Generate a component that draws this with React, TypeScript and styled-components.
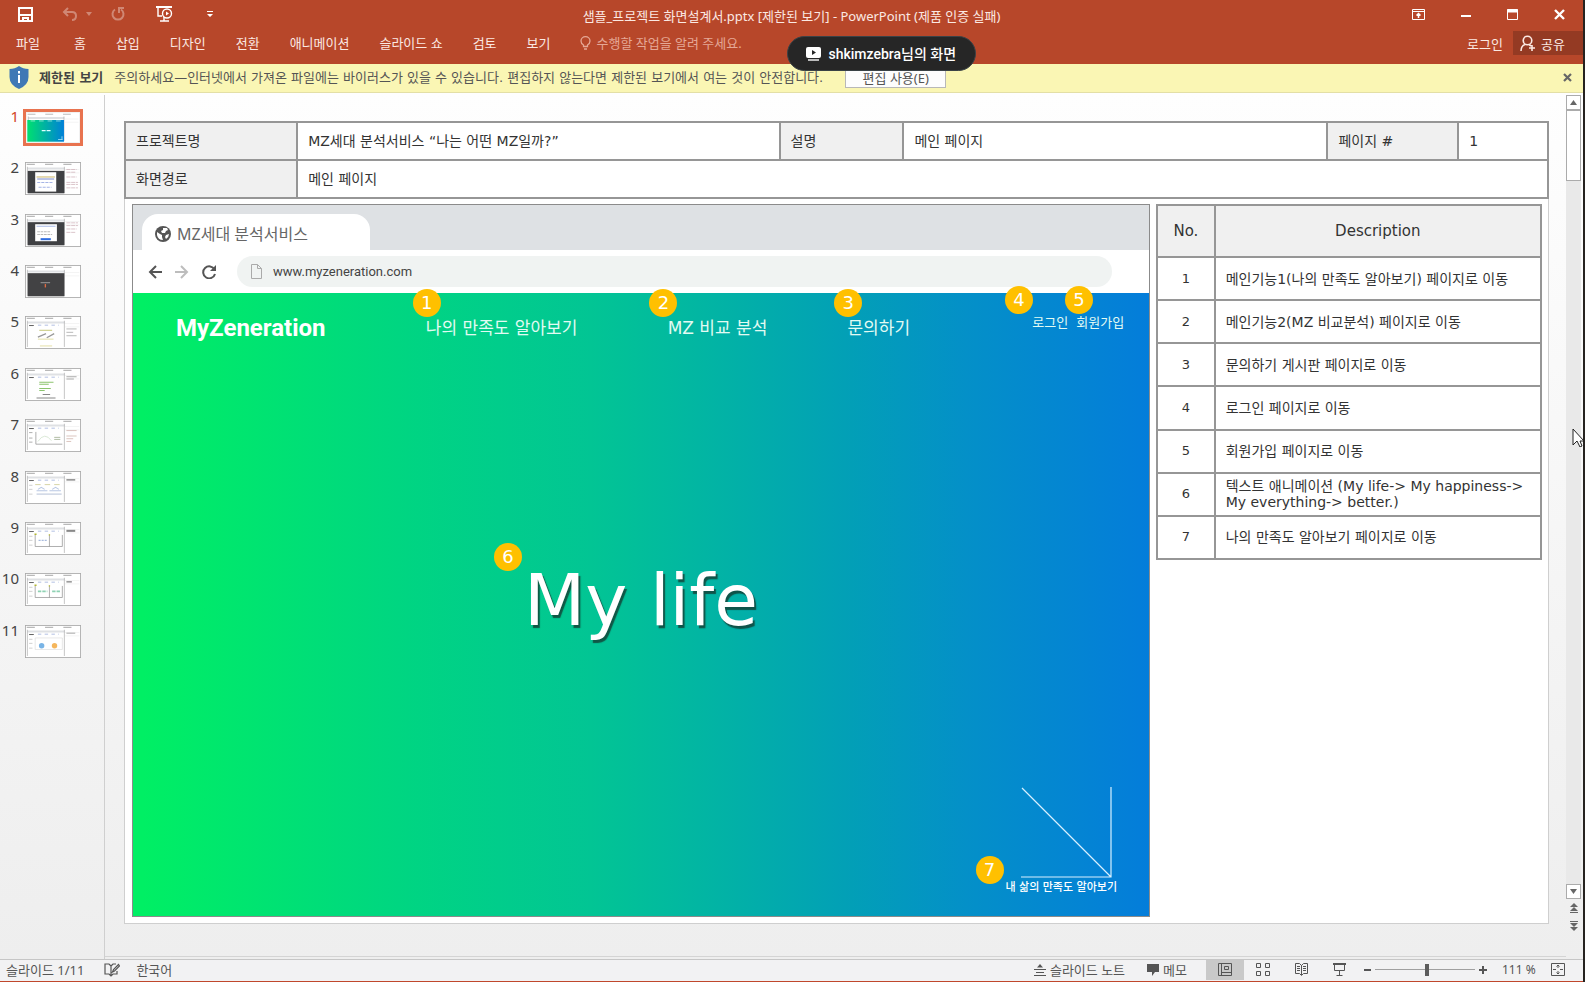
import React from "react";
import styled, { createGlobalStyle, css } from "styled-components";

const uiFont = `"Noto Sans", "Noto Sans CJK KR", sans-serif`;
const slideFont = `"DejaVu Sans", "Noto Sans CJK KR", sans-serif`;

const GlobalStyle = createGlobalStyle`
  *, *::before, *::after { box-sizing: border-box; }
  body { margin: 0; background: #262320; font-family: ${uiFont}; font-size: 13px; }
  button, input { font: inherit; color: inherit; }
  button { border: 0; background: none; padding: 0; cursor: pointer; }
  svg { display: block; flex: none; }
  table { border-collapse: collapse; }
`;

/* ---------- window frame ---------- */

const Window = styled.div`
  position: relative;
  display: flex;
  flex-direction: column;
  min-height: calc(100vh - 2px);
  margin: 0 2px 2px 0;
  background: #f0f0f0;
  border-bottom: 1px solid #c0472c;
`;

const Ribbon = styled.header`
  background: #b7472a;
  color: #fbe9e3;
  height: 64px;
`;

const TitleBar = styled.div`
  display: grid;
  grid-template-columns: 1fr auto 1fr;
  height: 31px;
`;

const QuickAccess = styled.div`
  display: flex;
  align-items: center;
  height: 28px;
  padding-left: 18px;
`;

const QuickButton = styled.button<{ $gap?: number; $dim?: boolean }>`
  margin-right: ${(p) => p.$gap ?? 0}px;
  opacity: ${(p) => (p.$dim ? 0.35 : 1)};
  color: #fff;
`;

const WindowTitle = styled.h1`
  margin: 0;
  font-size: 13px;
  font-weight: 400;
  line-height: 32px;
  white-space: nowrap;
`;

const WindowControls = styled.div`
  display: flex;
  justify-content: flex-end;
  height: 28px;
`;

const WindowButton = styled.button`
  display: grid;
  place-items: center;
  width: 47px;
  color: #fff;
`;

const TabRow = styled.nav`
  display: flex;
  align-items: center;
  height: 24px;
  padding-left: 1px;
  white-space: nowrap;
`;

const RibbonTab = styled.button<{ $file?: boolean }>`
  padding: 0 15px;
  ${(p) => p.$file && css`padding-right: 19px;`}
  line-height: 24px;
`;

const TellMe = styled.label`
  display: flex;
  align-items: center;
  gap: 5px;
  margin-left: 15px;
  flex: 1;
  color: #e5a896;
  input {
    flex: 1;
    min-width: 0;
    padding: 0;
    border: 0;
    outline: 0;
    background: none;
  }
  input::placeholder { color: #e5a896; opacity: 1; }
`;

const SignIn = styled.button`
  padding: 0 10px;
`;

const ShareButton = styled.button`
  display: flex;
  align-items: center;
  gap: 5px;
  width: 70px;
  height: 24px;
  padding-left: 7px;
  background: #943a23;
`;

const ScreenPill = styled.div`
  position: absolute;
  top: 36px;
  left: 50%;
  margin-left: -5px;
  display: flex;
  align-items: center;
  gap: 8px;
  width: 189px;
  height: 35px;
  padding-left: 18px;
  border: 1px solid #3a4246;
  border-radius: 18px;
  background: #262626;
  color: #fff;
  font: 500 14px/20px Roboto, "Noto Sans CJK KR", sans-serif;
  white-space: nowrap;
`;

/* ---------- protected view bar ---------- */

const MessageBar = styled.section`
  display: flex;
  align-items: center;
  height: 29px;
  padding: 0 11px 1px 9px;
  border-bottom: 1px solid #e3dfa6;
  background: #faf6b4;
  color: #555;
  font-family: ${slideFont};
  line-height: 18px;
  white-space: nowrap;
`;

const MessageTitle = styled.strong`
  margin: 0 11px 0 10px;
  color: #444;
`;

const EnableButton = styled.button`
  width: 101px;
  height: 21px;
  margin: 0 auto 0 22px;
  border: 1px solid #b8b8b8;
  background: #fdfdfd;
  font-family: ${uiFont};
  line-height: 18px;
`;

/* ---------- workspace ---------- */

const Workspace = styled.div`
  flex: 1;
  display: flex;
  background: linear-gradient(#fefefe, #f6f6f6 50%, #eeeeee);
`;

const ThumbPane = styled.aside`
  width: 105px;
  flex: none;
  margin-top: 2px;
  border-right: 1px solid #cfcfcf;
`;

const ThumbList = styled.ol`
  display: grid;
  grid-auto-rows: 1fr;
  height: 565px;
  margin: 14px 0 0;
  padding: 0;
  list-style: none;
`;

const ThumbButton = styled.button<{ $active?: boolean }>`
  display: grid;
  grid-template-columns: 19px 60px;
  gap: 4px;
  align-items: start;
  span {
    color: ${(p) => (p.$active ? "#d24726" : "#444")};
    font-size: 15px;
    line-height: 15px;
    text-align: right;
  }
  svg {
    width: 60px;
    height: 37px;
    border: ${(p) => (p.$active ? "3px solid #e8734f" : "2px solid transparent")};
  }
`;

const Stage = styled.main`
  flex: 1;
  min-width: 0;
  padding: 28px 17px 32px 19px;
  border-bottom: 1px solid #d4d4d4;
  margin-bottom: 2px;
`;

const Slide = styled.article`
  border: 1px solid #cfcfcf;
  border-top: 0;
  background: #fff;
  font-family: ${slideFont};
  color: #333;
`;

const InfoTable = styled.table`
  width: calc(100% + 2px);
  margin: 0 -1px;
  table-layout: fixed;
  font-size: 14px;
  th, td {
    height: 38px;
    padding: 0 10px;
    border: 2px solid #969696;
    font-weight: 400;
    text-align: left;
    line-height: 18px;
    white-space: nowrap;
  }
  th { background: #f0f0f0; }
`;

const SlideBody = styled.div`
  display: flex;
  align-items: flex-start;
  gap: 6px;
  padding: 5px 6px 6px 7px;
`;

const DescTable = styled.table`
  flex: 385 1 0;
  min-width: 0;
  height: 356px;
  table-layout: fixed;
  font-size: 14px;
  th, td {
    padding: 0 10px;
    border: 2px solid #969696;
    text-align: left;
    line-height: 16px;
  }
  thead th {
    height: 52px;
    background: #f0f0f0;
    font-size: 15px;
    font-weight: 400;
    text-align: center;
  }
  tbody tr { height: 43px; }
  tbody th {
    font-size: 13px;
    font-weight: 400;
    text-align: center;
  }
`;

/* ---------- browser mock ---------- */

const Browser = styled.section`
  flex: 1019 1 0;
  min-width: 0;
  border: 1px solid #8b8b8b;
  background: #fff;
`;

const TabStrip = styled.div`
  display: flex;
  align-items: flex-end;
  height: 45px;
  padding-left: 9px;
  background: #dee1e4;
`;

const BrowserTab = styled.div`
  display: flex;
  align-items: center;
  gap: 6px;
  width: 228px;
  height: 36px;
  padding: 4px 0 0 13px;
  border-radius: 16px 16px 0 0;
  background: #fff;
  color: #666;
  font: 16px/20px ${uiFont};
`;

const AddressRow = styled.div`
  display: flex;
  align-items: center;
  height: 43px;
  padding: 0 37px 0 15px;
  color: #555;
`;

const NavButton = styled.button<{ $dim?: boolean }>`
  width: 27px;
  color: ${(p) => (p.$dim ? "#bdbdbd" : "#555")};
`;

const AddressField = styled.label`
  display: flex;
  align-items: center;
  gap: 11px;
  flex: 1;
  height: 31px;
  margin-left: 8px;
  padding-left: 14px;
  border-radius: 16px;
  background: #f0f3f2;
  input {
    flex: 1;
    padding: 0;
    border: 0;
    background: none;
    color: #444;
    font: 13px/18px Roboto, sans-serif;
  }
`;

const Hero = styled.div`
  position: relative;
  display: flex;
  flex-direction: column;
  height: 623px;
  background: linear-gradient(
    90deg,
    #00ef64 1%,
    #00d582 27%,
    #02c594 45%,
    #02b4a4 57%,
    #02a0b6 70%,
    #0490c8 82%,
    #047dda 100%
  );
  color: #fff;
`;

const HeroNav = styled.nav`
  display: grid;
  grid-template-columns: 250fr 242fr 180fr 185fr auto;
  align-items: center;
  height: 66px;
  padding: 0 25px 0 43px;
  color: #e2fbf3;
  font-size: 17px;
  a { color: inherit; text-decoration: none; white-space: nowrap; }
`;

const Brand = styled.a`
  && { color: #fff; }
  padding-top: 3px;
  font: 700 24px/28px Roboto, sans-serif;
`;

const AuthLinks = styled.div`
  display: flex;
  gap: 8px;
  padding-bottom: 10px;
  font-size: 13px;
`;

const Headline = styled.h2`
  flex: 1;
  display: grid;
  place-items: center;
  margin: 0;
  padding-top: 56px;
  font-size: 71px;
  font-weight: 400;
  line-height: 84px;
  text-shadow: 2px 3px 1px rgba(20, 60, 50, 0.8);
`;

const HeroLink = styled.a`
  align-self: flex-end;
  display: flex;
  flex-direction: column;
  align-items: flex-end;
  margin-right: 32px;
  padding-bottom: 18px;
  color: #fff;
  font-size: 11px;
  font-weight: 500;
  line-height: 20px;
  text-decoration: none;
  svg { margin-right: 5px; }
`;

const Badge = styled.span<{ $x: number; $y: number }>`
  position: absolute;
  left: ${(p) => p.$x}%;
  top: ${(p) => p.$y}%;
  width: 28px;
  height: 28px;
  margin: -14px 0 0 -14px;
  border-radius: 50%;
  background: #ffc000;
  color: #fff;
  font-size: 18px;
  line-height: 28px;
  text-align: center;
`;

/* ---------- scroll bar ---------- */

const ScrollBar = styled.div`
  display: flex;
  flex-direction: column;
  align-items: center;
  width: 15px;
  margin: 2px 2px 24px 0;
  color: #666;
`;

const ScrollTrack = styled.div`
  flex: 1;
  width: 15px;
  background: #e9e9e9;
`;

const ScrollThumb = styled.div`
  height: 71px;
  border: 1px solid #ababab;
  background: #fff;
`;

const ScrollButton = styled.button<{ $plain?: boolean }>`
  display: grid;
  place-items: center;
  width: 15px;
  height: ${(p) => (p.$plain ? 18 : 15)}px;
  border: ${(p) => (p.$plain ? "0" : "1px solid #ababab")};
  background: ${(p) => (p.$plain ? "none" : "#fff")};
`;

const Cursor = styled.svg`
  position: absolute;
  right: 0;
  top: 428px;
`;

/* ---------- status bar ---------- */

const StatusBar = styled.footer`
  display: flex;
  align-items: center;
  height: 22px;
  padding: 0 18px 2px 6px;
  border-top: 1px solid #c6c6c6;
  background: #f2f2f3;
  color: #555;
  line-height: 18px;
  white-space: nowrap;
`;

const StatusButton = styled.button<{ $gap: number }>`
  display: flex;
  align-items: center;
  gap: 4px;
  margin-right: ${(p) => p.$gap}px;
`;

const ViewButtons = styled.div`
  display: flex;
  margin-right: 6px;
`;

const ViewButton = styled.button<{ $active?: boolean }>`
  display: grid;
  place-items: center;
  width: 38px;
  height: 20px;
  background: ${(p) => (p.$active ? "#c9c9c9" : "none")};
`;

const Push = styled.span`
  flex: 1;
`;

const ZoomRange = styled.input`
  appearance: none;
  width: 100px;
  height: 14px;
  margin: 0 4px;
  background: linear-gradient(#a0a0a0, #a0a0a0) center / 100% 1px no-repeat;
  &::-webkit-slider-thumb {
    appearance: none;
    width: 4px;
    height: 12px;
    background: #5c5c5c;
  }
`;

const ZoomValue = styled.span`
  width: 56px;
  padding-left: 15px;
  margin-right: 8px;
  font-size: 12px;
`;

/* ---------- data ---------- */

const ribbonTabs = ["파일", "홈", "삽입", "디자인", "전환", "애니메이션", "슬라이드 쇼", "검토", "보기"];

const descriptions = [
  "메인기능1(나의 만족도 알아보기) 페이지로 이동",
  "메인기능2(MZ 비교분석) 페이지로 이동",
  "문의하기 게시판 페이지로 이동",
  "로그인 페이지로 이동",
  "회원가입 페이지로 이동",
  "텍스트 애니메이션 (My life-> My happiness-> My everything-> better.)",
  "나의 만족도 알아보기 페이지로 이동",
];

const badges: [number, number][] = [
  [28.9, 1.6],
  [52.2, 1.6],
  [70.4, 1.6],
  [87.2, 1.1],
  [93.1, 1.1],
  [36.9, 42.3],
  [84.3, 92.6],
];

/* ---------- slide thumbnails ---------- */

const thumbArt: Record<number, React.ReactNode> = {
  1: (
    <>
      <rect x="4" y="25" width="112" height="68" fill="url(#thumbHero)" />
      <path d="M48 58h30" stroke="#dff" strokeWidth="4" strokeDasharray="12 3" />
      <path d="M98 86h14M110 76v10" stroke="#dff" strokeWidth="2" />
      <path d="M14 28h98" stroke="#cfe" strokeWidth="2" strokeDasharray="14 12" />
    </>
  ),
  2: (
    <>
      <rect x="8" y="26" width="108" height="66" fill="#3f4043" />
      <rect x="30" y="30" width="62" height="57" fill="#fff" />
      <path d="M34 44h54" stroke="#d9c98e" strokeWidth="4" />
      <path d="M36 50h50" stroke="#7d8ccf" strokeWidth="3" />
      <path d="M36 60h46M40 74h38" stroke="#a5b4e6" strokeWidth="3" strokeDasharray="9 3" />
      <path d="M122 22h30M122 30h26M122 44h30M122 60h34M122 66h34M122 76h34" stroke="#c9a9b2" strokeWidth="2" strokeDasharray="12 2" />
    </>
  ),
  3: (
    <>
      <rect x="8" y="24" width="108" height="68" fill="#3f4043" />
      <rect x="30" y="30" width="64" height="50" fill="#fff" />
      <path d="M34 36h56" stroke="#a9bbe8" strokeWidth="3" />
      <path d="M36 52h40M36 60h44" stroke="#bbb" strokeWidth="3" strokeDasharray="8 2" />
      <path d="M46 74h30" stroke="#2f6de0" strokeWidth="6" />
      <path d="M122 26h34M122 34h34M122 44h30M122 54h28" stroke="#c9a9b2" strokeWidth="2" strokeDasharray="12 2" />
    </>
  ),
  4: (
    <>
      <rect x="8" y="24" width="108" height="68" fill="#424244" />
      <path d="M46 52h28" stroke="#999" strokeWidth="3" />
      <path d="M60 56v10" stroke="#e06a42" strokeWidth="4" />
    </>
  ),
  5: (
    <>
      <path d="M42 42h38" stroke="#c7c97a" strokeWidth="3" />
      <path d="M38 62l24-10M64 64l22-12" stroke="#999" strokeWidth="4" />
      <path d="M38 68h46M44 88h36" stroke="#d6cf7a" strokeWidth="2" />
      <path d="M122 38h30M122 48h20M122 58h30" stroke="#999" strokeWidth="2" />
    </>
  ),
  6: (
    <>
      <path d="M42 42h42M42 48h28M42 60h34M42 66h16" stroke="#8cc46e" strokeWidth="3" />
      <path d="M52 78h22M34 88h56" stroke="#888" strokeWidth="3" />
      <path d="M122 26h30M122 32h22" stroke="#aaa" strokeWidth="3" />
    </>
  ),
  7: (
    <>
      <path d="M32 38v36h78M12 40h10M12 56h10M12 68h10" stroke="#888" strokeWidth="2" fill="none" />
      <path d="M38 66q20-30 40-2" stroke="#c9dfc4" strokeWidth="2" fill="none" />
      <path d="M86 54h18M86 60h18" stroke="#8b9d79" strokeWidth="2" />
      <path d="M122 34h30M122 50h30M122 58h20M122 66h14" stroke="#c9a9a0" strokeWidth="2" />
    </>
  ),
  8: (
    <>
      <path d="M30 40h80" stroke="#c3c07d" strokeWidth="2" strokeDasharray="16 12" />
      <path d="M34 58h32M72 58h34M38 54l10-6 10 6M80 54l10-6 10 6" stroke="#b9c8e4" strokeWidth="3" fill="none" />
      <path d="M34 68h74" stroke="#d4dbe8" strokeWidth="5" />
      <path d="M122 26h26" stroke="#999" strokeWidth="5" />
    </>
  ),
  9: (
    <>
      <path d="M30 38v34h80V38M72 38v34" stroke="#888" strokeWidth="2" fill="none" />
      <path d="M40 54h24" stroke="#a9bbdd" strokeWidth="3" strokeDasharray="6 3" />
      <path d="M28 36h6M70 38h4" stroke="#b5b833" strokeWidth="4" />
      <path d="M122 26h26" stroke="#888" strokeWidth="6" />
    </>
  ),
  10: (
    <>
      <path d="M30 38v34h80V38M72 38v34" stroke="#888" strokeWidth="2" fill="none" />
      <path d="M38 54h28M80 54h26" stroke="#8fd2b4" strokeWidth="5" strokeDasharray="10 3" />
      <path d="M28 36h6M70 38h4" stroke="#b5b833" strokeWidth="4" />
      <path d="M122 26h16" stroke="#888" strokeWidth="4" />
    </>
  ),
  11: (
    <>
      <path d="M30 38v34h80V38z" stroke="#ddd" strokeWidth="2" fill="none" />
      <circle cx="49" cy="61" r="8" fill="#79b4e6" />
      <circle cx="87" cy="61" r="8" fill="#f5b65c" />
      <path d="M122 24h26" stroke="#aaa" strokeWidth="3" />
    </>
  ),
};

function Thumb({ n }: { n: number }) {
  return (
    <svg viewBox="0 0 165 97" preserveAspectRatio="none" aria-hidden="true">
      <defs>
        <linearGradient id="thumbHero">
          <stop offset="0" stopColor="#00e070" />
          <stop offset="1" stopColor="#0080d8" />
        </linearGradient>
      </defs>
      <rect x="1" y="1" width="163" height="95" fill="#fff" stroke={n === 1 ? "#eee" : "#a9a9a9"} strokeWidth="3" />
      <path d="M5 7h155" stroke="#b9b9b9" strokeWidth="3" strokeDasharray="24 30" />
      <path d="M7 16h110v6H7z" fill="#dfe1e4" />
      <path d="M7 14v77M116 14v77" stroke="#aaa" strokeWidth="2" />
      <path d="M118 22h42M118 32h42" stroke="#ddd" strokeWidth="1" />
      {n > 4 && (
        <>
          <path d="M12 28h14" stroke="#666" strokeWidth="3" />
          <path d="M38 27h62" stroke="#8da2d6" strokeWidth="2" strokeDasharray="10 10" />
        </>
      )}
      {n > 7 && <path d="M12 42h10M12 54h10M12 68h10" stroke="#bbb" strokeWidth="2" />}
      {thumbArt[n]}
    </svg>
  );
}

/* ---------- page ---------- */

export default function App() {
  return (
    <Window>
      <GlobalStyle />
      <Ribbon>
        <TitleBar>
          <QuickAccess>
            <QuickButton $gap={29} aria-label="저장">
              <svg width="15" height="15" fill="none" stroke="currentColor" strokeWidth="2">
                <path d="M1 1h13v13H1zM2 8h11" />
                <path d="M5 14v-3h5v3" />
              </svg>
            </QuickButton>
            <QuickButton $gap={8} $dim aria-label="실행 취소">
              <svg width="16" height="14" fill="none" stroke="currentColor" strokeWidth="2">
                <path d="M6 1L2 5l4 4M2 5h8q4 0 4 4t-4 4" />
              </svg>
            </QuickButton>
            <QuickButton $gap={19} $dim aria-label="실행 취소 목록">
              <svg width="6" height="4" fill="currentColor"><path d="M0 0h6L3 4z" /></svg>
            </QuickButton>
            <QuickButton $gap={31} $dim aria-label="다시 실행">
              <svg width="14" height="14" fill="none" stroke="currentColor" strokeWidth="2">
                <path d="M4 2.500a5.500 5.500 0 1 0 6 0M8 6V1h5" />
              </svg>
            </QuickButton>
            <QuickButton $gap={34} aria-label="처음부터 시작">
              <svg width="17" height="16" fill="none" stroke="currentColor" strokeWidth="1.4">
                <path d="M0 1h16" strokeWidth="2" />
                <path d="M2 1v9h4M8 11v4M4 15h9" />
                <circle cx="11" cy="7.500" r="4.500" />
                <path d="M10 5.500v4l3-2z" fill="currentColor" stroke="none" />
              </svg>
            </QuickButton>
            <QuickButton aria-label="빠른 실행 도구 모음 사용자 지정">
              <svg width="6" height="6" fill="currentColor"><path d="M0 0h6v1H0zM0 3h6L3 6z" /></svg>
            </QuickButton>
          </QuickAccess>
          <WindowTitle>샘플_프로젝트 화면설계서.pptx [제한된 보기] - PowerPoint (제품 인증 실패)</WindowTitle>
          <WindowControls>
            <WindowButton aria-label="리본 메뉴 표시 옵션">
              <svg width="13" height="11" fill="none" stroke="currentColor">
                <path d="M.5.5h12v10H.5zM.5 2.500h12" />
                <path d="M6.500 9V4.500M4.500 6.500l2-2 2 2" strokeWidth="1.500" />
              </svg>
            </WindowButton>
            <WindowButton aria-label="최소화">
              <svg width="10" height="12" fill="currentColor"><path d="M0 7h10v2H0z" /></svg>
            </WindowButton>
            <WindowButton aria-label="최대화">
              <svg width="11" height="11" fill="none" stroke="currentColor"><path d="M.5.5h10v10H.5z" /><path d="M0 2h11" strokeWidth="3" /></svg>
            </WindowButton>
            <WindowButton aria-label="닫기">
              <svg width="11" height="11" stroke="currentColor" strokeWidth="2.400"><path d="M1 1l9 9M10 1l-9 9" /></svg>
            </WindowButton>
          </WindowControls>
        </TitleBar>
        <TabRow>
          {ribbonTabs.map((t, i) => (
            <RibbonTab key={t} $file={i === 0}>{t}</RibbonTab>
          ))}
          <TellMe>
            <svg width="11" height="15" fill="none" stroke="currentColor" strokeWidth="1.300">
              <path d="M3.500 10.500V9Q1 7.500 1 5a4.500 4.300 0 0 1 9 0q0 2.500-2.500 4v1.500zM4 13h3" />
            </svg>
            <input aria-label="수행할 작업" placeholder="수행할 작업을 알려 주세요." />
          </TellMe>
          <SignIn>로그인</SignIn>
          <ShareButton>
            <svg width="16" height="17" fill="none" stroke="currentColor" strokeWidth="1.600">
              <circle cx="7.500" cy="5.500" r="4.300" />
              <path d="M1 16q0-5 4-6.500M9 9.500l2 1.500M12 10v6M9 13h6" />
            </svg>
            공유
          </ShareButton>
        </TabRow>
      </Ribbon>

      <MessageBar>
        <svg width="20" height="23" viewBox="0 0 20 23">
          <path d="M10 0q4 3 9.500 3v8q0 8-9.500 12Q.5 19 .5 11V3Q6 3 10 0z" fill="#3f78b5" />
          <path d="M9 5h2v2.500H9zM9 9h2v8H9z" fill="#fff" />
        </svg>
        <MessageTitle>제한된 보기</MessageTitle>
        <span>주의하세요—인터넷에서 가져온 파일에는 바이러스가 있을 수 있습니다. 편집하지 않는다면 제한된 보기에서 여는 것이 안전합니다.</span>
        <EnableButton>편집 사용(E)</EnableButton>
        <button aria-label="메시지 닫기">
          <svg width="9" height="9" stroke="#666" strokeWidth="2.200"><path d="M1 1l7 7M8 1L1 8" /></svg>
        </button>
      </MessageBar>

      <Workspace>
        <ThumbPane>
          <ThumbList>
            {Array.from({ length: 11 }, (_, i) => i + 1).map((n) => (
              <li key={n}>
                <ThumbButton $active={n === 1}>
                  <span>{n}</span>
                  <Thumb n={n} />
                </ThumbButton>
              </li>
            ))}
          </ThumbList>
        </ThumbPane>

        <Stage>
          <Slide>
            <InfoTable>
              <colgroup>
                <col style={{ width: "12.1%" }} />
                <col style={{ width: "33.9%" }} />
                <col style={{ width: "8.7%" }} />
                <col style={{ width: "29.8%" }} />
                <col style={{ width: "9.2%" }} />
                <col style={{ width: "6.3%" }} />
              </colgroup>
              <tbody>
                <tr>
                  <th scope="row">프로젝트명</th>
                  <td>MZ세대 분석서비스 “나는 어떤 MZ일까?”</td>
                  <th scope="row">설명</th>
                  <td>메인 페이지</td>
                  <th scope="row">페이지 #</th>
                  <td>1</td>
                </tr>
                <tr>
                  <th scope="row">화면경로</th>
                  <td colSpan={5}>메인 페이지</td>
                </tr>
              </tbody>
            </InfoTable>

            <SlideBody>
              <Browser>
                <TabStrip>
                  <BrowserTab>
                    <svg width="16" height="16" viewBox="0 0 16 16">
                      <circle cx="8" cy="8" r="8" fill="#555" />
                      <path d="M2 6l3 2 2 1v2l1 3Q3 14 2 9zM8 2h4l1 2-2 1-1 2-3 0-1-2 2-1zM11 9l3-1q0 3-3 5l-1-2z" fill="#fff" />
                    </svg>
                    MZ세대 분석서비스
                  </BrowserTab>
                </TabStrip>
                <AddressRow>
                  <NavButton aria-label="뒤로">
                    <svg width="15" height="14" fill="none" stroke="currentColor" strokeWidth="2"><path d="M8 1L2 7l6 6M2 7h12" /></svg>
                  </NavButton>
                  <NavButton $dim aria-label="앞으로">
                    <svg width="15" height="14" fill="none" stroke="currentColor" strokeWidth="2"><path d="M6 1l6 6-6 6M0 7h12" /></svg>
                  </NavButton>
                  <NavButton aria-label="새로 고침">
                    <svg width="15" height="14" fill="none" stroke="currentColor" strokeWidth="2">
                      <path d="M12.500 4.500A6 6 0 1 0 13 9" />
                      <path d="M14 0v6H8z" fill="currentColor" stroke="none" />
                    </svg>
                  </NavButton>
                  <AddressField>
                    <svg width="11" height="15" fill="none" stroke="#aaa"><path d="M.5.5h6l4 4v10H.5zM6.500.5v4h4" /></svg>
                    <input aria-label="주소" defaultValue="www.myzeneration.com" />
                  </AddressField>
                </AddressRow>
                <Hero>
                  <HeroNav>
                    <Brand href="#home">MyZeneration</Brand>
                    <a href="#satisfaction">나의 만족도 알아보기</a>
                    <a href="#compare">MZ 비교 분석</a>
                    <a href="#contact">문의하기</a>
                    <AuthLinks>
                      <a href="#login">로그인</a>
                      <a href="#join">회원가입</a>
                    </AuthLinks>
                  </HeroNav>
                  <Headline>My life</Headline>
                  <HeroLink href="#satisfaction">
                    <svg width="91" height="91" fill="none" stroke="#d8f0ff" strokeWidth="1.200">
                      <path d="M1 1l89 89M90 0v90H0" />
                    </svg>
                    내 삶의 만족도 알아보기
                  </HeroLink>
                  {badges.map(([x, y], i) => (
                    <Badge key={i} $x={x} $y={y}>{i + 1}</Badge>
                  ))}
                </Hero>
              </Browser>

              <DescTable>
                <colgroup>
                  <col style={{ width: "15%" }} />
                  <col />
                </colgroup>
                <thead>
                  <tr>
                    <th scope="col">No.</th>
                    <th scope="col">Description</th>
                  </tr>
                </thead>
                <tbody>
                  {descriptions.map((d, i) => (
                    <tr key={d}>
                      <th scope="row">{i + 1}</th>
                      <td>{d}</td>
                    </tr>
                  ))}
                </tbody>
              </DescTable>
            </SlideBody>
          </Slide>
        </Stage>

        <ScrollBar>
          <ScrollButton aria-label="위로 스크롤">
            <svg width="7" height="5" fill="currentColor"><path d="M0 5h7L3.500 0z" /></svg>
          </ScrollButton>
          <ScrollTrack><ScrollThumb /></ScrollTrack>
          <ScrollButton aria-label="아래로 스크롤">
            <svg width="7" height="5" fill="currentColor"><path d="M0 0h7L3.500 5z" /></svg>
          </ScrollButton>
          <ScrollButton $plain aria-label="이전 슬라이드">
            <svg width="8" height="10" fill="currentColor"><path d="M0 4h8L4 0zM0 8h8L4 4zM0 9h8v1H0z" /></svg>
          </ScrollButton>
          <ScrollButton $plain aria-label="다음 슬라이드">
            <svg width="8" height="10" fill="currentColor"><path d="M0 0h8v1H0zM0 2h8L4 6zM0 6h8l-4 4z" /></svg>
          </ScrollButton>
        </ScrollBar>
      </Workspace>

      <StatusBar>
        <StatusButton $gap={20}>슬라이드 1/11</StatusButton>
        <StatusButton $gap={16} aria-label="맞춤법 검사">
          <svg width="16" height="14" fill="none" stroke="currentColor" strokeWidth="1.200">
            <path d="M7 3L5 1H1v10h4l2 2 2-2h4V8M7 3v10M7 3l2-2h3M8.500 9l1-2.500 5-5 1 1.500-5 5z" />
          </svg>
        </StatusButton>
        <StatusButton $gap={0}>한국어</StatusButton>
        <Push />
        <StatusButton $gap={22}>
          <svg width="12" height="12" fill="none" stroke="currentColor"><path d="M0 5.500h12M2 8.500h8M0 11.500h12" /><path d="M3 3.500h6L6 0z" fill="currentColor" stroke="none" /></svg>
          슬라이드 노트
        </StatusButton>
        <StatusButton $gap={19}>
          <svg width="12" height="12" fill="currentColor"><path d="M0 0h12v8H8l-3 4V8H0z" /></svg>
          메모
        </StatusButton>
        <ViewButtons>
          <ViewButton $active aria-label="기본">
            <svg width="14" height="13" fill="none" stroke="currentColor"><path d="M.5.5h13v12H.5zM3.500.5v12M3.500 9.500h10M6.500 3.500h4v3h-4z" /></svg>
          </ViewButton>
          <ViewButton aria-label="여러 슬라이드">
            <svg width="14" height="13" fill="none" stroke="currentColor"><path d="M.5.5h4v4h-4zM9.500.5h4v4h-4zM.5 8.500h4v4h-4zM9.500 8.500h4v4h-4z" /></svg>
          </ViewButton>
          <ViewButton aria-label="읽기용 보기">
            <svg width="13" height="13" fill="none" stroke="currentColor"><path d="M.5.500h4l2 2 2-2h4v10h-4l-2 2-2-2h-4zM6.500 2v10M2 3.500h3M2 5.500h3M2 7.500h3M8 3.500h3M8 5.500h3M8 7.500h3" /></svg>
          </ViewButton>
          <ViewButton aria-label="슬라이드 쇼">
            <svg width="13" height="13" fill="none" stroke="currentColor"><path d="M0 1h13" strokeWidth="2" /><path d="M1.500 2v5.500h10V2M6.500 7.500v5M3.500 12.500h6" /></svg>
          </ViewButton>
        </ViewButtons>
        <button aria-label="축소">
          <svg width="7" height="8" fill="currentColor"><path d="M0 3h7v2H0z" /></svg>
        </button>
        <ZoomRange type="range" aria-label="확대/축소" defaultValue={52} />
        <button aria-label="확대">
          <svg width="8" height="8" fill="currentColor"><path d="M0 3h8v2H0zM3 0h2v8H3z" /></svg>
        </button>
        <ZoomValue>111 %</ZoomValue>
        <button aria-label="현재 창 크기에 맞춤">
          <svg width="14" height="13" fill="none" stroke="currentColor"><path d="M.5.5h13v12H.5zM7 2v3M5.500 3.500L7 2l1.500 1.500M7 11V8M5.500 9.500L7 11l1.500-1.500M2 6.500h3M12 6.500H9" /></svg>
        </button>
      </StatusBar>

      <ScreenPill>
        <svg width="15" height="14" viewBox="0 0 15 14">
          <rect width="15" height="11" rx="2" fill="#fff" />
          <path d="M2 12h11v2H2z" fill="#bbb" />
          <path d="M6 3l4 2.500L6 8z" fill="#262626" />
        </svg>
        shkimzebra님의 화면
      </ScreenPill>

      <Cursor width="11" height="19" viewBox="0 0 11 19">
        <path d="M1 1v16l4-4 3 6 2-1-2-5h4z" fill="#fff" stroke="#222" />
      </Cursor>
    </Window>
  );
}
